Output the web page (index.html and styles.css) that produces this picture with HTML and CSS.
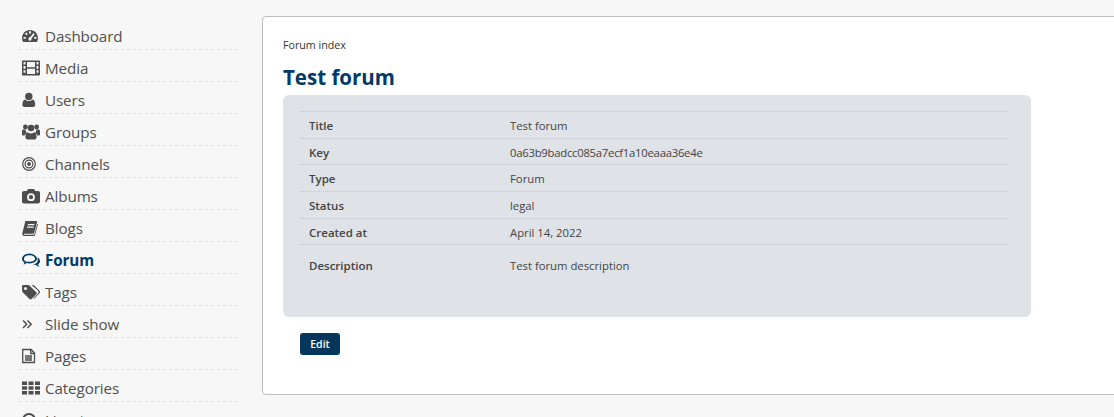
FILE: index.html
```html
<!DOCTYPE html>
<html lang="en">
<head>
<meta charset="utf-8">
<title>Test forum</title>
<link rel="stylesheet" href="styles.css">
</head>
<body>
<div class="page">
  <nav class="side">
    <a class="item"><svg class="ic" preserveAspectRatio="xMinYMid" viewBox="0 0 16 16"><path fill-rule="evenodd" d="M8 2C3.600 2 0 5.600 0 10c0 1.400.4 2.700 1 3.800.2.200.4.200.6.200h12.800c.2 0 .4 0 .6-.2.600-1.100 1-2.400 1-3.800 0-4.400-3.600-8-8-8zM7 3.300h2v2.200H7zM3 5.400l1.500-1 1.200 1.800-1.500 1zM1.500 9h2.300v1.800H1.500zm10.700 0h2.300v1.800h-2.300zM11.300 5l1.500 1.200-3.300 4.300c.2.800-.4 2.300-1.500 2.300S6.500 11.500 6.500 10.700C6.500 9.600 7.500 9 8.500 9z"/></svg><span>Dashboard</span></a>
    <a class="item"><svg class="ic" preserveAspectRatio="xMinYMid" viewBox="0 0 18 16"><path fill-rule="evenodd" d="M1 .5h16c.6 0 1 .4 1 1v13c0 .6-.4 1-1 1H1c-.6 0-1-.4-1-1v-13c0-.6.4-1 1-1zM1.500 2v2.600h2V2zm0 4v2.800h2V6zm0 4.200v2.600h2v-2.600zm0 4v.1h2v-.1zM5 2v5.200h8V2zm0 6.800V14h8V8.800zM14.500 2v2.600h2V2zm0 4v2.800h2V6zm0 4.200v2.600h2v-2.600z"/></svg><span>Media</span></a>
    <a class="item"><svg class="ic" preserveAspectRatio="xMinYMid" viewBox="0 0 16 16"><circle cx="6.800" cy="4.500" r="3.700"/><path d="M3.200 7.500C1.200 7.800.4 10 .4 13c0 1.200.8 2 2 2h8.800c1.200 0 2-.8 2-2 0-3-.8-5.200-2.800-5.500-1 1-2.200 1.600-3.600 1.600S4.200 8.500 3.200 7.500z"/></svg><span>Users</span></a>
    <a class="item"><svg class="ic" preserveAspectRatio="xMinYMid" viewBox="0 0 18 16"><circle cx="3.400" cy="3" r="2.400"/><circle cx="14.600" cy="3" r="2.400"/><circle cx="9" cy="4" r="3.300"/><path d="M0 7.500c0-1.500.6-2 1.500-2h2.200c-.1 1.400.3 2.700 1.200 3.500-1.300.4-2 1.300-2.300 2.600H1.200C.5 11.600 0 11 0 10.200zM18 7.500c0-1.500-.6-2-1.500-2h-2.200c.1 1.400-.3 2.700-1.200 3.500 1.300.4 2 1.300 2.300 2.600h1.400c.7 0 1.200-.6 1.200-1.400z"/><path d="M6 8.300c.8.800 1.800 1.200 3 1.200s2.200-.4 3-1.200c1.800.1 2.600 2 2.600 4.500 0 1.800-.8 2.700-2 2.700H5.400c-1.200 0-2-.9-2-2.700 0-2.500.8-4.400 2.600-4.500z"/></svg><span>Groups</span></a>
    <a class="item"><svg class="ic" preserveAspectRatio="xMinYMid" viewBox="0 0 16 16"><circle class="ring" cx="7" cy="8" r="6.300"/><circle class="ring" cx="7" cy="8" r="3.900"/><circle cx="7" cy="8" r="1.900"/></svg><span>Channels</span></a>
    <a class="item"><svg class="ic" preserveAspectRatio="xMinYMid" viewBox="0 0 18 16"><path fill-rule="evenodd" d="M6 1h6l1.200 2H16c1.100 0 2 .9 2 2v8.500c0 1.100-.9 2-2 2H2c-1.100 0-2-.9-2-2V5c0-1.100.9-2 2-2h2.800zM9 5.300a3.900 3.900 0 1 0 0 7.800 3.900 3.900 0 0 0 0-7.800zm0 1.800a2.100 2.100 0 1 1 0 4.200 2.100 2.100 0 0 1 0-4.200z"/></svg><span>Albums</span></a>
    <a class="item"><svg class="ic" preserveAspectRatio="xMinYMid" viewBox="0 0 16 16"><path fill-rule="evenodd" d="M3.500 1H14c.9 0 1.300.6 1 1.500l-2.600 9.700c-.3 1-.9 1.500-1.900 1.500H2.800c-.6 0-1 .5-.8 1h10.300l3-11 .7.500-3 11c-.2.700-.7 1-1.400 1H2.500C1 16 0 14.500.3 13.300L3 2.500C3.200 1.600 3.300 1 3.500 1zM6 4l-.3 1.200h6.500L12.500 4zM5.200 6.500 4.900 7.700h6.500l.3-1.200z"/></svg><span>Blogs</span></a>
    <a class="item active"><svg class="ic" preserveAspectRatio="xMinYMid" viewBox="0 0 18 16"><path fill-rule="evenodd" d="M7.500 1.500C3.400 1.500 0 3.800 0 6.800c0 1.500 1 2.900 2.500 3.800-.2.700-.6 1.300-1.200 2 1.200-.2 2.500-.8 3.400-1.500.9.200 1.800.3 2.800.3 4.100 0 7.500-2.200 7.500-4.600S11.600 1.500 7.500 1.500zm0 1.800c3.200 0 5.600 1.600 5.600 3.500s-2.400 3-5.600 3c-1 0-1.900-.1-2.900-.4l-.9.600c-.1-.4 0-.7 0-1.100C2.500 9.100 1.900 8 1.900 6.800c0-1.900 2.400-3.500 5.600-3.500z"/><path d="M15.200 5.200C17 6.200 18 7.600 18 9.200c0 1.200-.8 2.300-2 3 .2.900.7 1.700 1.500 2.500-1.600-.2-2.800-1-3.700-2-1.100.2-2.100.2-3.200 0 2.300-.3 5-1.700 5-3.900.3-1.200.2-2.700-.4-3.600z"/></svg><span>Forum</span></a>
    <a class="item"><svg class="ic" preserveAspectRatio="xMinYMid" viewBox="0 0 18 16"><path fill-rule="evenodd" d="M1.200 1H6c.6 0 1.300.3 1.700.7l6.600 6.500c.6.600.6 1.500 0 2.100l-4.700 4.700c-.6.500-1.500.5-2.100 0L.9 8.400C.4 8 .1 7.300.1 6.700V2.100C0 1.500.6 1 1.200 1zm2.300 2a1.500 1.500 0 1 0 0 3 1.500 1.500 0 0 0 0-3z"/><path d="M9.500 1h1.300c.6 0 1.300.3 1.700.7l5 5c.7.700.7 1.800 0 2.500l-4.900 5c-.4.400-.9.500-1.500.3l4.800-4.800c.8-.9.800-2.200 0-3.100z"/></svg><span>Tags</span></a>
    <a class="item"><svg class="ic" preserveAspectRatio="xMinYMid" viewBox="0 0 16 16"><path class="chev" d="M1 4.500 4.700 8.300 1 12M5.500 4.500 9.200 8.300 5.500 12"/></svg><span>Slide show</span></a>
    <a class="item"><svg class="ic" preserveAspectRatio="xMinYMid" viewBox="0 0 16 16"><path class="line" d="M.7 1.500h8.500l3.300 3.500v9.500H.7zM8.700 1.500V5.500h3.800M3 8h7M3 10h7M3 12h7"/></svg><span>Pages</span></a>
    <a class="item"><svg class="ic" preserveAspectRatio="xMinYMid" viewBox="0 0 18 16"><path d="M0 1.500h5V5H0zm6.500 0h5V5h-5zm6.500 0h5V5h-5zM0 6.300h5v3.400H0zm6.500 0h5v3.400h-5zm6.500 0h5v3.400h-5zM0 11h5v3.500H0zm6.500 0h5v3.500h-5zm6.500 0h5v3.500h-5z"/></svg><span>Categories</span></a>
    <a class="item"><svg class="ic" preserveAspectRatio="xMinYMid" viewBox="0 0 16 16"><circle class="ring2" cx="7" cy="8" r="6"/></svg><span>Livestream</span></a>
  </nav>
  <main class="card">
    <div class="crumb">Forum index</div>
    <h1 class="title">Test forum</h1>
    <section class="panel">
      <div class="rows">
        <div class="row"><b>Title</b><span>Test forum</span></div>
        <div class="row"><b>Key</b><span class="hash">0a63b9badcc085a7ecf1a10eaaa36e4e</span></div>
        <div class="row"><b>Type</b><span>Forum</span></div>
        <div class="row"><b>Status</b><span>legal</span></div>
        <div class="row"><b>Created at</b><span>April 14, 2022</span></div>
        <div class="row desc"><b>Description</b><span>Test forum description</span></div>
      </div>
    </section>
    <div class="actions"><button class="btn">Edit</button></div>
  </main>
</div>
</body>
</html>
```
FILE: styles.css
```css
* { box-sizing: border-box; }
html, body { margin: 0; height: 417px; overflow: hidden; background: #f7f7f7; }
body { font-family: "Open Sans", "Noto Sans", sans-serif; color: #454545; }
.page { display: flex; align-items: flex-start; width: 1114px; }
.side { width: 262px; flex: none; padding: 18px 22px 0 19px; display: flex; flex-direction: column; }
.item { display: flex; align-items: center; height: 32px; padding: 4px 0 0 3px; font-size: 15.200px; color: #505050; background: repeating-linear-gradient(90deg, #dcdcdc 0 3px, transparent 3px 6px) left bottom / 100% 1px no-repeat; }
.item span { margin-left: 5px; letter-spacing: -.1px; }
.ic { width: 18px; height: 16px; flex: none; fill: #4d4d4d; }
.ring { fill: none; stroke: #4d4d4d; stroke-width: 1.200; }
.ring2 { fill: none; stroke: #4d4d4d; stroke-width: 2; }
.chev { fill: none; stroke: #4d4d4d; stroke-width: 1.500; }
.line { fill: none; stroke: #4d4d4d; stroke-width: 1.300; }
.item.active { color: #003a66; font-weight: 700; }
.item.active .ic { fill: #003a66; }
.card { flex: none; width: 900px; height: 379px; margin-top: 16px; padding: 20px 0 0 20px; background: #fff; border: 1px solid #bdbdbd; border-radius: 4px; }
.crumb { font-size: 10.700px; line-height: 16px; color: #333; }
.title { margin: 10px 0 0; font-size: 20.500px; line-height: 29px; font-weight: 700; color: #003a66; }
.panel { width: 748px; height: 222px; margin-top: 3px; padding: 16px 21px 0 17px; background: #dfe2e6; border-radius: 6px; }
.row { display: flex; align-items: center; height: 26.700px; padding: 1.500px 0 0 9px; border-top: 1px dotted #c4c6cb; font-size: 11.300px; color: #444; }
.row b { width: 201px; flex: none; font-weight: 600; font-size: 11.500px; }
.hash { letter-spacing: -.25px; }
.row.desc { height: 44px; padding: 0 0 2px 9px; }
.actions { padding: 16px 0 0 17px; }
.btn { display: block; width: 40px; height: 22px; padding: 0; border: 0; border-radius: 3px; background: #05375c; color: #fff; font: 600 10.500px "Open Sans", sans-serif; }
```
